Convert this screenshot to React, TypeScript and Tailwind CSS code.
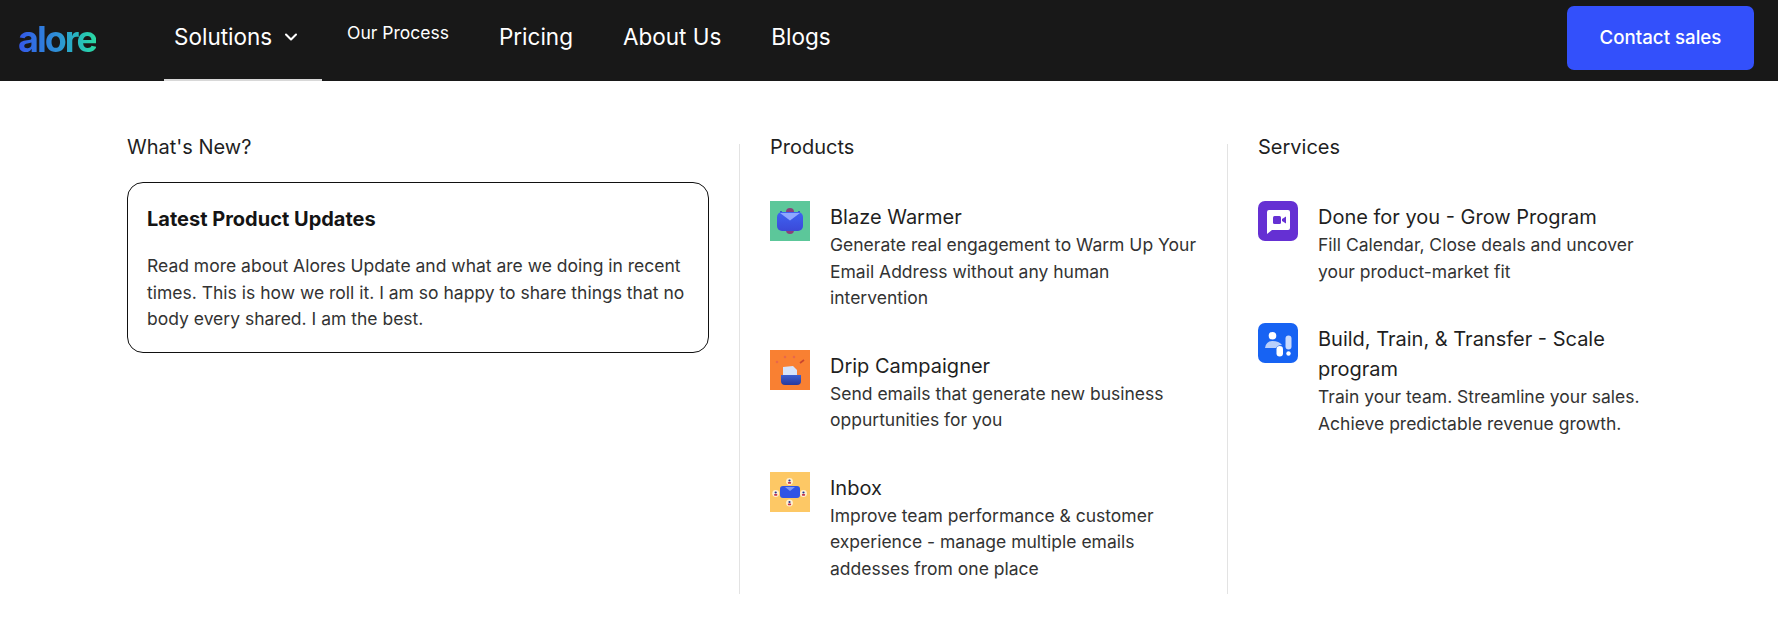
import { ChevronDown } from "lucide-react";
import type { ReactNode } from "react";

function BlazeIcon() {
  return (
    <svg viewBox="0 0 40 40" className="w-10 h-10 shrink-0">
      <defs>
        <linearGradient id="blaze-env" x1="0" y1="0" x2="0" y2="1">
          <stop offset="0" stopColor="#3f63f2" />
          <stop offset="1" stopColor="#3b49d8" />
        </linearGradient>
      </defs>
      <rect width="40" height="40" fill="#5cc79a" />
      <path d="M16 11 Q16 7 20 7 Q24 7 24 11 Z" fill="#8a3f7c" />
      <path d="M16 29 H24 Q24 33 20 33 Q16 33 16 29 Z" fill="#8a3f7c" />
      <circle cx="11" cy="11" r="1" fill="#2b3fc0" />
      <circle cx="29" cy="11" r="1" fill="#2b3fc0" />
      <rect x="7" y="11" width="26" height="19" rx="5" fill="url(#blaze-env)" />
      <path d="M10 12 H30 L20 19.5 Z" fill="#8fa6ff" />
    </svg>
  );
}

function DripIcon() {
  return (
    <svg viewBox="0 0 40 40" className="w-10 h-10 shrink-0">
      <defs>
        <linearGradient id="drip-tray" x1="0" y1="0" x2="0" y2="1">
          <stop offset="0" stopColor="#3d5fd0" />
          <stop offset="1" stopColor="#27399c" />
        </linearGradient>
      </defs>
      <rect width="40" height="40" fill="#f98032" />
      <circle cx="7" cy="12" r="1.3" fill="#e8684a" />
      <circle cx="15" cy="7" r="1.3" fill="#e8684a" />
      <circle cx="24" cy="7" r="1.3" fill="#e8684a" />
      <path d="M30 13 L34 10" stroke="#c9452f" strokeWidth="1.6" />
      <path d="M13 17 L23 16 L27 20 V26 H13 Z" fill="#d6e3fa" />
      <path d="M11 25 H31 V31 Q31 35 27 35 H15 Q11 35 11 31 Z" fill="url(#drip-tray)" />
    </svg>
  );
}

function InboxIcon() {
  return (
    <svg viewBox="0 0 40 40" className="w-10 h-10 shrink-0">
      <rect width="40" height="40" fill="#fdc865" />
      <rect x="10" y="14" width="20" height="12" rx="3" fill="#3054e6" />
      <path d="M15 15 L20 19 L25 15 Z" fill="#7f97f5" />
      {[
        [19.5, 9.5],
        [19.5, 31],
        [5.7, 21.5],
        [33.5, 21.5],
      ].map(([cx, cy]) => (
        <g key={`${cx}-${cy}`}>
          <circle cx={cx} cy={cy} r="3.4" fill="#fff1d2" />
          <circle cx={cx} cy={cy - 1} r="1.1" fill="#24348f" />
          <rect x={cx - 1.6} y={cy + 0.4} width="3.2" height="1.8" rx="0.6" fill="#c2334f" />
        </g>
      ))}
    </svg>
  );
}

function VideoChatIcon() {
  return (
    <svg viewBox="0 0 40 40" className="w-10 h-10 shrink-0">
      <rect width="40" height="40" rx="7" fill="#6530d3" />
      <path d="M11 9 H30 Q32 9 32 11 V27 Q32 29 30 29 H14 L9 33 V11 Q9 9 11 9 Z" fill="#fff" />
      <rect x="15" y="15" width="8" height="8" rx="1.5" fill="#6530d3" />
      <path d="M24 18 L28 15.5 V22.5 L24 20 Z" fill="#6530d3" />
    </svg>
  );
}

function TeamIcon() {
  return (
    <svg viewBox="0 0 40 40" className="w-10 h-10 shrink-0">
      <rect width="40" height="40" rx="7" fill="#1763f3" />
      <circle cx="14.5" cy="12.7" r="3.8" fill="#fff" />
      <path d="M7 25 Q8 18 14.5 18 Q21 18 24 22 Q19.5 22 18 25 Z" fill="#b9cffb" />
      <rect x="18.5" y="23" width="6.5" height="10.5" rx="3.25" fill="#fff" />
      <rect x="27.5" y="12.5" width="6" height="14" rx="3" fill="#c9dafc" />
      <circle cx="30.5" cy="30.5" r="2.2" fill="#fff" />
    </svg>
  );
}

function MenuItem({
  icon,
  title,
  lines,
  className,
}: {
  icon: ReactNode;
  title: ReactNode;
  lines: string[];
  className?: string;
}) {
  return (
    <div className={`flex gap-5 ${className ?? ""}`}>
      {icon}
      <div className="mt-[1px]">
        <h4 className="text-[20px] leading-[30px] text-[#1f1f1f]">{title}</h4>
        {lines.map((line) => (
          <p key={line} className="text-[17.5px] leading-[26.5px] text-[#333] whitespace-nowrap">
            {line}
          </p>
        ))}
      </div>
    </div>
  );
}

export default function App() {
  return (
    <div className="h-[630px] bg-white overflow-hidden font-['Inter',sans-serif]">
      {/* Nav */}
      <header className="h-[81px] bg-[#181818] flex items-center text-white">
        <div className="w-[164px] pl-[18px] pb-[3px]">
          <span className="text-[36px] leading-none font-bold tracking-[-0.055em] bg-gradient-to-r from-[#3556e8] via-[#2f8fd6] to-[#2bd9a0] bg-clip-text text-transparent">
            alore
          </span>
        </div>
        <nav className="flex items-center h-full">
          <div className="relative w-[158px] h-full flex items-center pl-[10px] gap-[9px] pb-[7px]">
            <span className="text-[22.5px]">Solutions</span>
            <ChevronDown className="w-5 h-5" strokeWidth={2.5} />
            <span className="absolute left-0 right-0 bottom-0 h-[2px] bg-[#d8d8d8]" />
          </div>
          <span className="ml-[25px] text-[17.5px] pb-[14px]">Our Process</span>
          <span className="ml-[50px] text-[22.5px] pb-[7px]">Pricing</span>
          <span className="ml-[50px] text-[22.5px] pb-[7px]">About Us</span>
          <span className="ml-[50px] text-[22.5px] pb-[7px]">Blogs</span>
        </nav>
        <button className="ml-auto mr-[24px] self-start mt-[6px] w-[187px] h-[64px] rounded-[7px] bg-[#3350fb] text-white text-[18.7px] font-medium">
          Contact sales
        </button>
      </header>

      {/* Mega menu */}
      <main className="flex pt-[63px] pl-[127px]">
        <section className="w-[582px]">
          <h3 className="text-[20px] leading-[22px] text-[#1f1f1f] -mt-[8px]">What's New?</h3>
          <div className="mt-[24px] h-[171px] border border-[#111] rounded-[16px] px-[19px] pt-[23px]">
            <h4 className="text-[20px] leading-[26px] font-bold text-[#141414]">Latest Product Updates</h4>
            <p className="mt-[21px] text-[17.5px] leading-[26.5px] text-[#333] whitespace-nowrap">
              Read more about Alores Update and what are we doing in recent
              <br />
              times. This is how we roll it. I am so happy to share things that no
              <br />
              body every shared. I am the best.
            </p>
          </div>
        </section>

        <section className="ml-[30px] w-[488px] h-[450px] border-l border-[#e3e3e3] pl-[30px]">
          <h3 className="text-[20px] leading-[22px] text-[#1f1f1f] -mt-[8px]">Products</h3>
          <MenuItem
            className="mt-[43px]"
            icon={<BlazeIcon />}
            title="Blaze Warmer"
            lines={[
              "Generate real engagement to Warm Up Your",
              "Email Address without any human",
              "intervention",
            ]}
          />
          <MenuItem
            className="mt-[38px]"
            icon={<DripIcon />}
            title="Drip Campaigner"
            lines={["Send emails that generate new business", "oppurtunities for you"]}
          />
          <MenuItem
            className="mt-[38px]"
            icon={<InboxIcon />}
            title="Inbox"
            lines={[
              "Improve team performance & customer",
              "experience - manage multiple emails",
              "addesses from one place",
            ]}
          />
        </section>

        <section className="w-[400px] h-[450px] border-l border-[#e3e3e3] pl-[30px]">
          <h3 className="text-[20px] leading-[22px] text-[#1f1f1f] -mt-[8px]">Services</h3>
          <MenuItem
            className="mt-[43px]"
            icon={<VideoChatIcon />}
            title="Done for you - Grow Program"
            lines={["Fill Calendar, Close deals and uncover", "your product-market fit"]}
          />
          <MenuItem
            className="mt-[38px]"
            icon={<TeamIcon />}
            title={
              <>
                Build, Train, & Transfer - Scale
                <br />
                program
              </>
            }
            lines={["Train your team. Streamline your sales.", "Achieve predictable revenue growth."]}
          />
        </section>
      </main>
    </div>
  );
}
